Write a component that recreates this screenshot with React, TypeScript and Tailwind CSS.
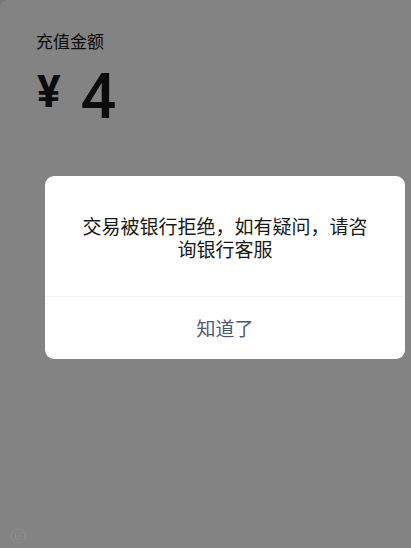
export default function App() {
  return (
    <div className="relative flex min-h-screen flex-col bg-[#838383] font-['Noto_Sans_CJK_SC',sans-serif] text-[#0b0b0b]">
      <span className="absolute left-0 top-0 size-2 bg-[#777777]">
        <span className="block size-full rounded-tl-lg bg-[#838383]" />
      </span>
      <main className="flex-1 px-9 pt-[29px]">
        <h1 className="text-[17px] leading-6">充值金额</h1>
        <p className="mt-2 flex items-start gap-5 pl-px">
          <span className="font-['Roboto',sans-serif] text-[44px] font-bold leading-[62px]">¥</span>
          <span className="font-['Roboto',sans-serif] text-[63px] font-medium leading-[72px]">4</span>
        </p>
      </main>
      <footer className="px-2.5 pb-1">
        <svg className="size-4" viewBox="0 0 16 16" fill="none" stroke="#8d8d8d" aria-hidden="true">
          <circle cx="8" cy="8" r="7" />
          <path d="M5.5 4.5v5a2.5 2.5 0 0 0 5 0V6.500a2 2 0 0 0-2-2M8 7v2" />
        </svg>
      </footer>

      <div className="absolute inset-0 flex items-center pb-3.5 pl-[45px] pr-1.5">
        <section role="dialog" aria-modal="true" aria-labelledby="message" className="w-full overflow-hidden rounded-[9px] bg-white">
          <p id="message" className="px-9 pb-9 pt-[38px] text-center text-[19px] leading-[23px] text-[#181818]">
            交易被银行拒绝，如有疑问，请咨询银行客服
          </p>
          <button type="button" className="block h-[63px] w-full border-t border-[#f3f3f3] pt-px text-[19px] text-[#4d5872]">
            知道了
          </button>
        </section>
      </div>
    </div>
  );
}
